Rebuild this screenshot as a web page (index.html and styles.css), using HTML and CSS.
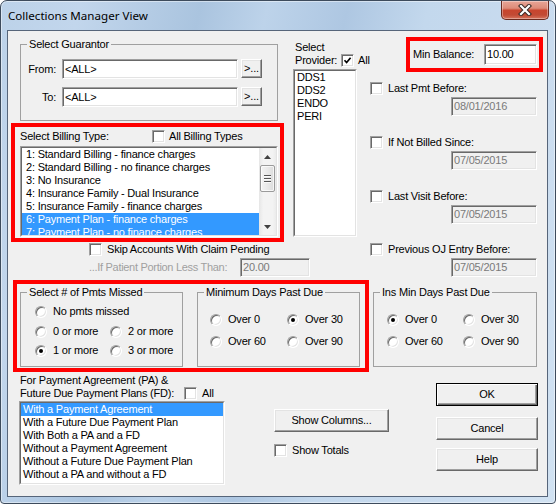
FILE: index.html
```html
<!DOCTYPE html>
<html>
<head>
<meta charset="utf-8">
<title>Collections Manager View</title>
<link rel="stylesheet" href="styles.css">
</head>
<body>
<div class="window">
  <div class="titlebar">
    <span class="title">Collections Manager View</span>
    <div class="close">
      <svg width="14" height="12" viewBox="0 0 14 12">
        <path d="M3 2 L11 10 M11 2 L3 10" stroke="#3b2a26" stroke-width="4.2" stroke-linecap="square"/>
        <path d="M3 2 L11 10 M11 2 L3 10" stroke="#ffffff" stroke-width="2.2" stroke-linecap="square"/>
      </svg>
    </div>
  </div>
  <div class="client">
    <div class="row-a">
      <div class="col-l">
        <fieldset class="group guarantor">
          <legend>Select Guarantor</legend>
          <div class="field-row first">
            <span class="field-label">From:</span>
            <div class="tb guar-tb">&lt;ALL&gt;</div>
            <div class="btn browse">&gt;...</div>
          </div>
          <div class="field-row">
            <span class="field-label">To:</span>
            <div class="tb guar-tb">&lt;ALL&gt;</div>
            <div class="btn browse">&gt;...</div>
          </div>
        </fieldset>
        <div class="redbox billing">
          <div class="billing-head">
            <span class="billing-title">Select Billing Type:</span>
            <span class="check"></span>
            <span class="check-text">All Billing Types</span>
          </div>
          <div class="lb billing-list">
            <div class="lb-in">
              <div class="lb-items billing-items">
                <div class="item">1: Standard Billing - finance charges</div>
                <div class="item">2: Standard Billing - no finance charges</div>
                <div class="item">3: No Insurance</div>
                <div class="item">4: Insurance Family - Dual Insurance</div>
                <div class="item">5: Insurance Family - finance charges</div>
                <div class="item sel">6: Payment Plan - finance charges</div>
                <div class="item sel">7: Payment Plan - no finance charges</div>
              </div>
              <div class="scrollbar">
                <div class="sb-btn">
                  <svg width="7" height="4" viewBox="0 0 7 4"><polygon points="0,4 3.5,0 7,4" fill="#404040"/></svg>
                </div>
                <div class="sb-thumb">
                  <span class="grip"></span><span class="grip"></span><span class="grip"></span>
                </div>
                <div class="sb-track"></div>
                <div class="sb-btn">
                  <svg width="7" height="4" viewBox="0 0 7 4"><polygon points="0,0 7,0 3.5,4" fill="#404040"/></svg>
                </div>
              </div>
            </div>
          </div>
        </div>
        <div class="check-row skip">
          <span class="check"></span>
          <span class="check-text">Skip Accounts With Claim Pending</span>
        </div>
        <div class="patient-row">
          <span class="patient-label">...If Patient Portion Less Than:</span>
          <div class="tb disabled patient-tb">20.00</div>
        </div>
      </div>

      <div class="col-m">
        <div class="prov-select">Select</div>
        <div class="prov-row">
          <span class="prov-label">Provider:</span>
          <span class="check">
            <svg width="9" height="9" viewBox="0 0 9 9"><polyline points="1.5,4.2 3.6,6.5 7.6,1.8" fill="none" stroke="#000" stroke-width="1.7"/></svg>
          </span>
          <span class="check-text">All</span>
        </div>
        <div class="lb prov-list">
          <div class="lb-in">
            <div class="lb-items">
              <div class="item">DDS1</div>
              <div class="item">DDS2</div>
              <div class="item">ENDO</div>
              <div class="item">PERI</div>
            </div>
          </div>
        </div>
      </div>

      <div class="col-r">
        <div class="redbox minbal">
          <span>Min Balance:</span>
          <div class="tb minbal-tb">10.00</div>
        </div>
        <div class="check-row date-check first">
          <span class="check"></span>
          <span class="check-text">Last Pmt Before:</span>
        </div>
        <div class="tb disabled date-tb">08/01/2016</div>
        <div class="check-row date-check">
          <span class="check"></span>
          <span class="check-text">If Not Billed Since:</span>
        </div>
        <div class="tb disabled date-tb">07/05/2015</div>
        <div class="check-row date-check">
          <span class="check"></span>
          <span class="check-text">Last Visit Before:</span>
        </div>
        <div class="tb disabled date-tb">07/05/2015</div>
        <div class="check-row date-check last">
          <span class="check"></span>
          <span class="check-text">Previous OJ Entry Before:</span>
        </div>
        <div class="tb disabled date-tb">07/05/2015</div>
      </div>
    </div>

    <div class="row-b">
      <div class="redbox pmts">
        <fieldset class="group radio-group g-missed">
          <legend>Select # of Pmts Missed</legend>
          <div class="group-body">
            <div class="opt solo"><span class="radio"></span>No pmts missed</div>
            <div class="opt-grid missed-grid">
              <div class="opt"><span class="radio"></span>0 or more</div>
              <div class="opt"><span class="radio"></span>2 or more</div>
              <div class="opt"><span class="radio on"></span>1 or more</div>
              <div class="opt"><span class="radio"></span>3 or more</div>
            </div>
          </div>
        </fieldset>
        <fieldset class="group radio-group g-days">
          <legend>Minimum Days Past Due</legend>
          <div class="group-body">
            <div class="opt-grid days-grid">
              <div class="opt"><span class="radio"></span>Over 0</div>
              <div class="opt"><span class="radio on"></span>Over 30</div>
              <div class="opt"><span class="radio"></span>Over 60</div>
              <div class="opt"><span class="radio"></span>Over 90</div>
            </div>
          </div>
        </fieldset>
      </div>
      <fieldset class="group radio-group g-ins">
        <legend>Ins Min Days Past Due</legend>
        <div class="group-body">
          <div class="opt-grid days-grid ins-grid">
            <div class="opt"><span class="radio on"></span>Over 0</div>
            <div class="opt"><span class="radio"></span>Over 30</div>
            <div class="opt"><span class="radio"></span>Over 60</div>
            <div class="opt"><span class="radio"></span>Over 90</div>
          </div>
        </div>
      </fieldset>
    </div>

    <div class="row-c">
      <div class="pa-block">
        <div class="pa-line1">For Payment Agreement (PA) &amp;</div>
        <div class="pa-line2">
          <span class="pa-label">Future Due Payment Plans (FD):</span>
          <span class="check"></span>
          <span class="check-text">All</span>
        </div>
        <div class="lb pa-list">
          <div class="lb-in">
            <div class="lb-items">
              <div class="item sel">With a Payment Agreement</div>
              <div class="item">With a Future Due Payment Plan</div>
              <div class="item">With Both a PA and a FD</div>
              <div class="item">Without a Payment Agreement</div>
              <div class="item">Without a Future Due Payment Plan</div>
              <div class="item">Without a PA and without a FD</div>
            </div>
          </div>
        </div>
      </div>
      <div class="mid-block">
        <div class="btn show-cols">Show Columns...</div>
        <div class="check-row totals">
          <span class="check"></span>
          <span class="check-text">Show Totals</span>
        </div>
      </div>
      <div class="btn-block">
        <div class="btn default ok">OK</div>
        <div class="btn cancel">Cancel</div>
        <div class="btn help">Help</div>
      </div>
    </div>
  </div>
</div>
</body>
</html>
```
FILE: styles.css
```css
* { box-sizing: border-box; }
html, body { margin: 0; padding: 0; }
body {
  width: 556px;
  height: 504px;
  overflow: hidden;
  background: #ffffff;
  font-family: "Liberation Sans", Arial, sans-serif;
  font-size: 11px;
  line-height: 13px;
  letter-spacing: -0.2px;
  color: #000;
}

/* ---------- window frame ---------- */
.window {
  width: 556px;
  height: 504px;
  border: 1px solid #3d4b5c;
  border-radius: 7px 7px 4px 4px;
  background: linear-gradient(103deg, #bcd2e9 0%, #c2d6ec 12%, #aac4df 30%, #bdd3ea 40%, #aec7e2 52%, #c3d8ed 64%, #cadcef 84%, #d1e2f2 100%);
  box-shadow: inset 0 0 0 1px rgba(255,255,255,0.45);
  display: flex;
  flex-direction: column;
  overflow: hidden;
}
.titlebar {
  height: 29px;
  flex: none;
  display: flex;
  justify-content: space-between;
  align-items: flex-start;
}
.title {
  font-family: "Noto Sans", "Open Sans", sans-serif;
  font-size: 11.6px;
  letter-spacing: 0;
  line-height: 16px;
  margin: 7px 0 0 7px;
  color: #000;
}
.close {
  width: 48px;
  height: 19px;
  margin-right: 6px;
  border: 1px solid #6b2a1f;
  border-top: none;
  border-radius: 0 0 5px 5px;
  background: linear-gradient(#e8a597 0%, #dd8b79 40%, #c8452e 52%, #c24a34 78%, #d7745d 100%);
  box-shadow: inset 0 0 0 1px rgba(255,255,255,0.35);
  display: flex;
  align-items: center;
  justify-content: center;
}
.client {
  margin-left: 6px;
  width: 541px;
  height: 467px;
  flex: none;
  border: 1px solid #56657a;
  background: #f0f0f0;
}

/* ---------- common controls ---------- */
.group {
  margin: 0;
  padding: 0;
  min-width: 0;
  border: 1px solid #a0a0a0;
}
.group legend {
  padding: 0 2px;
  margin-left: 6px;
  height: 13px;
  line-height: 13px;
}
.tb {
  background: #fff;
  border: 1px solid;
  border-color: #a0a0a0 #fff #fff #a0a0a0;
  box-shadow: inset 1px 1px 0 #696969, inset -1px -1px 0 #e3e3e3;
  padding-left: 2px;
  display: flex;
  align-items: center;
  white-space: nowrap;
  overflow: hidden;
}
.tb.disabled {
  background: #f0f0f0;
  color: #7a7a7a;
}
.btn {
  background: #f0f0f0;
  border: 1px solid;
  border-color: #fff #696969 #696969 #fff;
  box-shadow: inset -1px -1px 0 #a0a0a0, inset 1px 1px 0 #e3e3e3;
  display: flex;
  align-items: center;
  justify-content: center;
  white-space: nowrap;
}
.btn.default {
  border: 1px solid #000;
  box-shadow: inset 1px 1px 0 #fff, inset -1px -1px 0 #696969, inset -2px -2px 0 #a0a0a0;
}
.check {
  width: 13px;
  height: 13px;
  flex: none;
  background: #fff;
  border: 1px solid;
  border-color: #a0a0a0 #fff #fff #a0a0a0;
  box-shadow: inset 1px 1px 0 #696969, inset -1px -1px 0 #e3e3e3;
  display: flex;
  align-items: center;
  justify-content: center;
}
.check-row {
  display: flex;
  align-items: center;
  height: 13px;
}
.check-text { margin-left: 5px; white-space: nowrap; }
.radio {
  position: relative;
  width: 12px;
  height: 12px;
  flex: none;
  border-radius: 50%;
  background: #fff;
  border: 1px solid;
  border-color: #a0a0a0 #fff #fff #a0a0a0;
  box-shadow: inset 1px 1px 0 #696969, inset -1px -1px 0 #e3e3e3;
}
.radio.on::after {
  content: "";
  position: absolute;
  left: 3px;
  top: 3px;
  width: 4px;
  height: 4px;
  border-radius: 50%;
  background: #000;
}
.opt {
  display: flex;
  align-items: center;
  gap: 6px;
  height: 13px;
  white-space: nowrap;
}
.redbox {
  border: 4px solid #ff0000;
  flex: none;
}

/* list boxes */
.lb {
  border: 1px solid;
  border-color: #a0a0a0 #fff #fff #a0a0a0;
  flex: none;
}
.lb-in {
  height: 100%;
  border: 1px solid;
  border-color: #696969 #e3e3e3 #e3e3e3 #696969;
  background: #fff;
  display: flex;
  overflow: hidden;
}
.lb-items { flex: 1; min-width: 0; overflow: hidden; }
.item {
  height: 13px;
  line-height: 13px;
  padding-left: 2px;
  white-space: nowrap;
}
.item.sel { background: #3399ff; color: #fff; }
.billing-items .item { padding-left: 4px; }

.scrollbar {
  width: 17px;
  flex: none;
  display: flex;
  flex-direction: column;
  background: linear-gradient(to right, #e6e6e6 0%, #f3f3f3 25%, #f3f3f3 80%, #ebebeb 100%);
}
.sb-btn {
  height: 17px;
  flex: none;
  display: flex;
  align-items: center;
  justify-content: center;
}
.sb-thumb {
  height: 27px;
  flex: none;
  margin: 0 1px;
  border: 1px solid #9b9b9b;
  border-radius: 2px;
  background: linear-gradient(to right, #f4f4f4 0%, #e9e9e9 50%, #dcdcdc 100%);
  box-shadow: inset 0 0 0 1px rgba(255,255,255,0.7);
  display: flex;
  flex-direction: column;
  align-items: center;
  justify-content: center;
  gap: 1px;
}
.grip {
  width: 7px;
  height: 2px;
  border-top: 1px solid #555;
  border-bottom: 1px solid #fafafa;
}
.sb-track { flex: 1; }

/* ---------- row A ---------- */
.row-a {
  margin-top: 6px;
  height: 241px;
  display: flex;
  align-items: flex-start;
}
.col-l {
  margin-left: 3px;
  width: 273px;
  flex: none;
  display: flex;
  flex-direction: column;
}
.guarantor {
  margin: 1px 0 0 9px;
  width: 258px;
  height: 83px;
}
.field-row {
  display: flex;
  align-items: flex-start;
  height: 20px;
  margin-top: 8px;
}
.field-label {
  width: 41px;
  flex: none;
  padding-right: 6px;
  text-align: right;
  line-height: 20px;
}
.guar-tb { width: 176px; height: 20px; flex: none; }
.browse { width: 21px; height: 19px; margin-left: 3px; flex: none; }

.billing {
  margin-top: 2px;
  width: 273px;
  height: 119px;
  padding-left: 5px;
}
.billing-head {
  display: flex;
  align-items: center;
  height: 13px;
  margin-top: 3px;
}
.billing-title { width: 132px; flex: none; white-space: nowrap; }
.billing-head .check-text { margin-left: 4px; }
.billing-list {
  margin-top: 3px;
  width: 258px;
  height: 91px;
}
.skip { margin: 1px 0 0 78px; }
.patient-row {
  margin: 2px 0 0 78px;
  height: 19px;
  display: flex;
  align-items: center;
  width: 221px;
}
.patient-label { width: 151px; flex: none; color: #a0a0a0; white-space: nowrap; letter-spacing: -0.3px; }
.patient-tb { width: 70px; height: 19px; flex: none; color: #8a8a8a; }

.col-m {
  margin-left: 9px;
  width: 77px;
  flex: none;
  display: flex;
  flex-direction: column;
}
.prov-select { margin-top: 4px; padding-left: 2px; height: 13px; }
.prov-row {
  display: flex;
  align-items: center;
  height: 13px;
  padding-left: 2px;
}
.prov-label { width: 46px; flex: none; white-space: nowrap; }
.prov-row .check-text { margin-left: 4px; }
.prov-list {
  margin-top: 2px;
  width: 64px;
  height: 168px;
}

.col-r {
  width: 173px;
  flex: none;
  display: flex;
  flex-direction: column;
}
.minbal {
  margin-left: 36px;
  width: 137px;
  height: 35px;
  padding: 0 2px 0 3px;
  display: flex;
  align-items: center;
  justify-content: space-between;
}
.minbal-tb { width: 53px; height: 21px; flex: none; }
.date-check { margin-top: 20px; }
.date-check.first { margin-top: 10px; }
.date-check.last { margin-top: 19px; }
.date-tb {
  margin: 2px 0 0 81px;
  width: 86px;
  height: 19px;
  flex: none;
}

/* ---------- row B ---------- */
.row-b {
  margin-top: 2px;
  display: flex;
  align-items: flex-start;
}
.pmts {
  margin-left: 5px;
  width: 356px;
  height: 92px;
  padding: 2px 0 0 3px;
  display: flex;
  align-items: flex-start;
}
.radio-group { height: 81px; flex: none; }
.g-missed { width: 163px; }
.g-missed .group-body { padding-left: 14px; }
.g-days { width: 163px; margin-left: 14px; }
.g-days .group-body { padding-left: 12px; }
.g-ins { width: 164px; margin: 6px 0 0 4px; }
.g-ins .group-body { padding-left: 13px; }
.opt-grid {
  display: grid;
  grid-template-columns: 75px auto;
}
.opt.solo { margin-top: 6px; }
.missed-grid { margin-top: 7px; row-gap: 6px; }
.days-grid {
  grid-template-columns: 77px auto;
  margin-top: 14px;
  row-gap: 9px;
}
.ins-grid { grid-template-columns: 76px auto; }

/* ---------- row C ---------- */
.row-c {
  display: flex;
  align-items: flex-start;
}
.pa-block {
  margin-left: 11px;
  width: 206px;
  flex: none;
  display: flex;
  flex-direction: column;
}
.pa-line1 { margin-top: 2px; padding-left: 1px; height: 13px; white-space: nowrap; }
.pa-line2 {
  display: flex;
  align-items: center;
  height: 13px;
  padding-left: 1px;
}
.pa-label { width: 164px; flex: none; white-space: nowrap; }
.pa-list {
  margin-top: 1px;
  width: 206px;
  height: 84px;
}
.mid-block {
  margin-left: 49px;
  width: 115px;
  flex: none;
  display: flex;
  flex-direction: column;
}
.show-cols { margin-top: 37px; height: 23px; }
.totals { margin-top: 12px; }
.btn-block {
  margin-left: 47px;
  width: 102px;
  flex: none;
  display: flex;
  flex-direction: column;
}
.btn-block .btn { height: 23px; }
.ok { margin-top: 11px; }
.cancel { margin-top: 11px; }
.help { margin-top: 8px; }
```
